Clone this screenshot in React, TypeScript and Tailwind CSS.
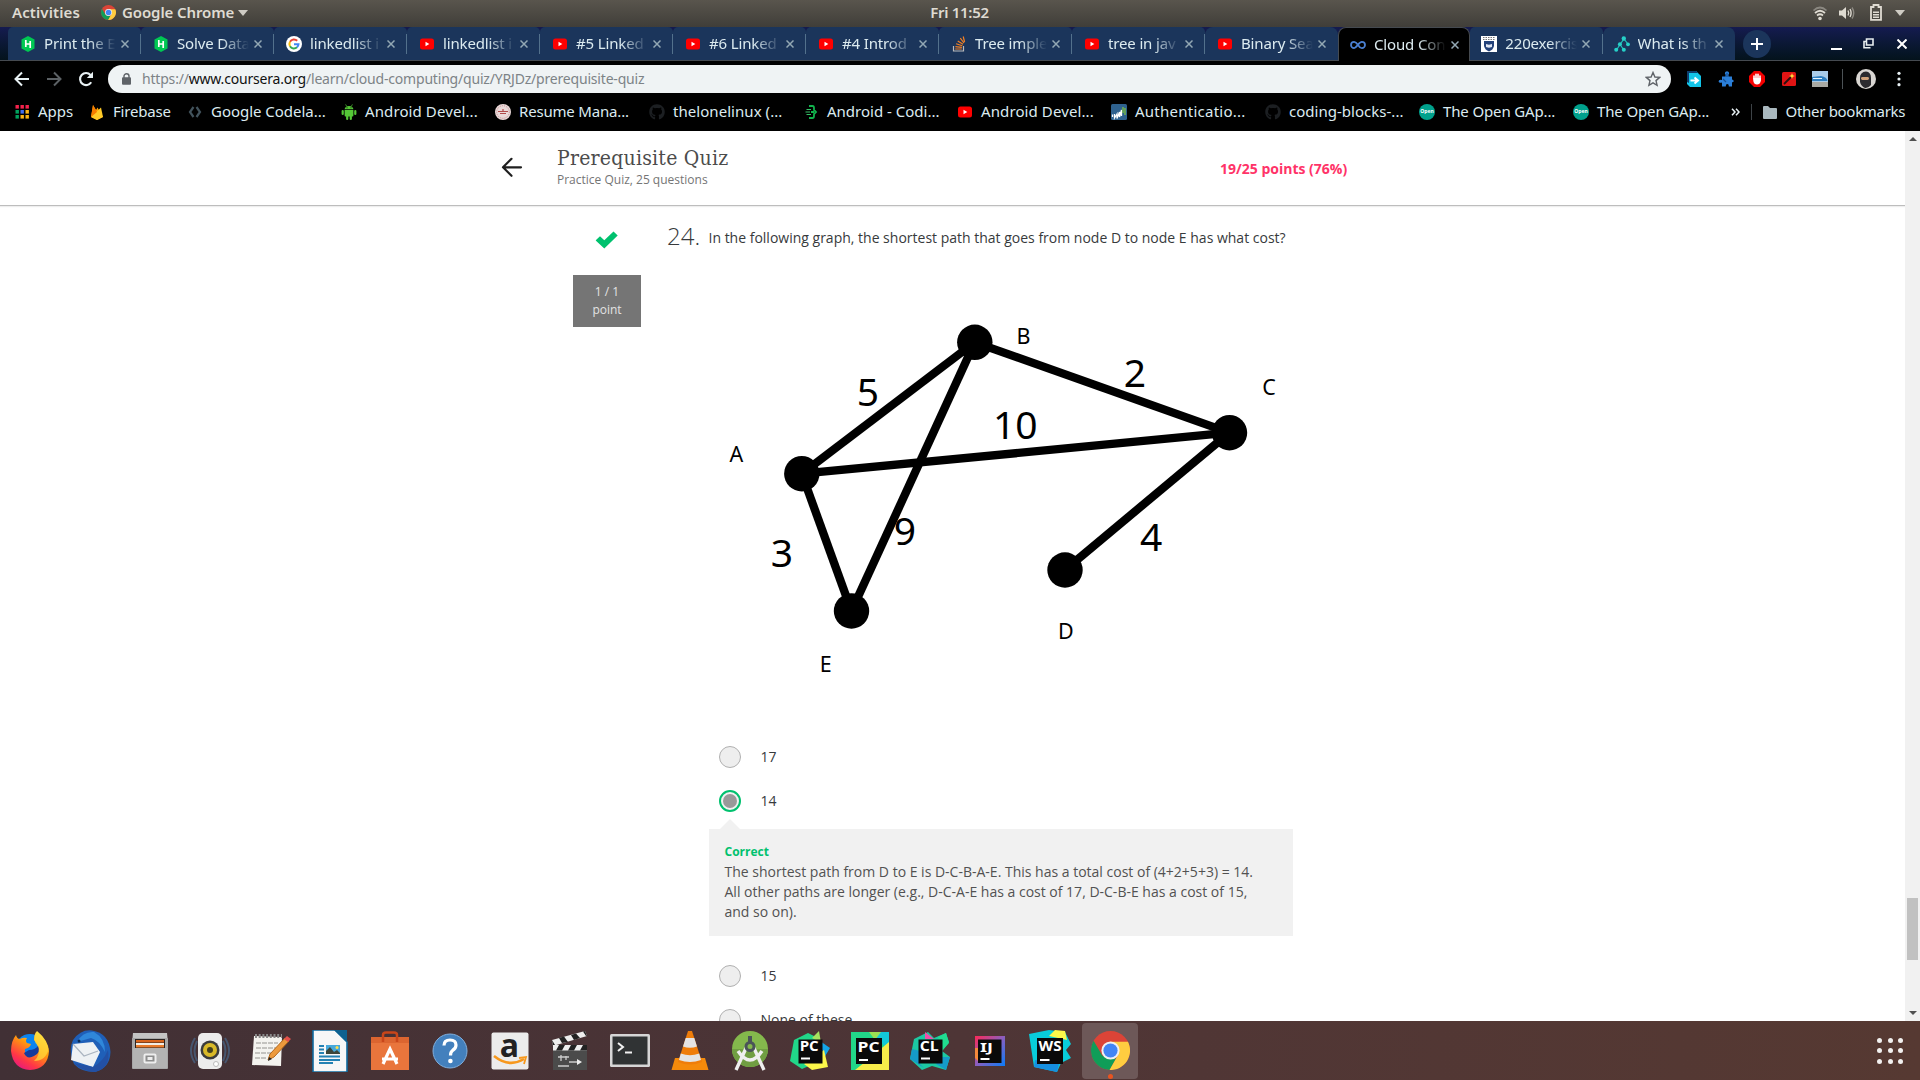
import React from "react";
import { FaGithub } from "react-icons/fa";

type P = { children?: React.ReactNode };

const Svg = ({ s = 16, vb = 16, children }: P & { s?: number; vb?: number }) => (
  <svg width={s} height={s} viewBox={`0 0 ${vb} ${vb}`} className="block shrink-0" fill="none">
    {children}
  </svg>
);

/* ---------- small icons ---------- */

const Chrome = ({ s = 16 }: { s?: number }) => (
  <Svg s={s} vb={40}>
    <circle cx="20" cy="20" r="20" fill="#db4437" />
    <path d="M2.7 10 L11.5 25 L20 29 L26 28 L19 40 A20 20 0 0 1 2.7 10" fill="#109d58" />
    <path d="M20 11 H37.9 A20 20 0 0 1 19 40 L28 24 Z" fill="#ffcd40" />
    <circle cx="20" cy="20" r="9.3" fill="#f1f1f1" />
    <circle cx="20" cy="20" r="7.3" fill="#4285f4" />
  </Svg>
);

const Hacker = () => (
  <Svg>
    <path d="M8 0 L14.5 3.5 V12.5 L8 16 L1.5 12.5 V3.5 Z" fill="#00c853" />
    <path d="M5.8 4 V11 M10.2 5 V12 M5.8 8 H10.2" stroke="#fff" strokeWidth="1.7" />
  </Svg>
);

const Google = () => (
  <Svg>
    <circle cx="8" cy="8" r="8" fill="#fff" />
    <path d="M11.2 4.8 A4.6 4.6 0 0 0 4 5.8" stroke="#ea4335" strokeWidth="2" />
    <path d="M4 5.8 A4.6 4.6 0 0 0 4 10.3" stroke="#fbbc05" strokeWidth="2" />
    <path d="M4 10.3 A4.6 4.6 0 0 0 11 11.3" stroke="#34a853" strokeWidth="2" />
    <path d="M8 8.2 H12.5 A4.6 4.6 0 0 1 11 11.3" stroke="#4285f4" strokeWidth="2" />
  </Svg>
);

const YouTube = () => (
  <Svg>
    <rect x="1" y="2.5" width="14" height="11" rx="2.5" fill="#f00" />
    <path d="M6.5 5.8 L10.3 8 L6.5 10.2 Z" fill="#fff" />
  </Svg>
);

const Android = () => (
  <Svg>
    <g fill="#55c837">
      <path d="M3.6 5.2 Q4 2 8 1.9 Q12 2 12.4 5.2 Z" />
      <path d="M3.6 5.9 H12.4 V11.6 Q12.4 12.5 11.5 12.5 H4.5 Q3.6 12.5 3.6 11.6 Z" />
      <rect x="0.6" y="5.9" width="2.2" height="5.2" rx="1.1" />
      <rect x="13.2" y="5.9" width="2.2" height="5.2" rx="1.1" />
      <rect x="5.1" y="11" width="2.2" height="5" rx="1.1" />
      <rect x="8.7" y="11" width="2.2" height="5" rx="1.1" />
    </g>
    <path d="M4.6 .4 L5.8 2.6 M11.4 .4 L10.2 2.6" stroke="#55c837" strokeWidth=".7" />
    <circle cx="6" cy="3.8" r=".5" fill="#000" />
    <circle cx="10" cy="3.8" r=".5" fill="#000" />
  </Svg>
);

const Stack = () => (
  <Svg>
    <path d="M2.5 10 V15 H12.5 V10" stroke="#bcbbbb" strokeWidth="1.2" />
    <path d="M4.2 13 H10.8 M4.4 10.6 L10.9 11.4 M5.1 7.8 L11.3 9.8 M6.7 4.9 L12 8.3 M9.3 2.2 L13 7 M12.2 .5 L13.6 6" stroke="#f48024" strokeWidth="1.2" />
  </Svg>
);

const Infinity2 = () => (
  <Svg>
    <path d="M8 8 C6.5 5.6 5.3 4.9 4.1 4.9 A3.1 3.1 0 0 0 4.1 11.1 C6.6 11.1 8.6 4.9 11.9 4.9 A3.1 3.1 0 0 1 11.9 11.1 C10.7 11.1 9.4 10.3 8 8" stroke="#4a7fd0" strokeWidth="1.8" />
  </Svg>
);

const Crest = () => (
  <Svg>
    <rect width="16" height="16" fill="#fff" />
    <path d="M2 1.5 H14 M2 3.5 H14" stroke="#777" strokeWidth="1" strokeDasharray="1.5 1" />
    <path d="M3 5 H13 V10 Q12 14 8 15.5 Q4 14 3 10 Z" fill="#24427a" />
    <path d="M5 8 L8 8.7 L11 8 V11 L8 11.7 L5 11 Z" fill="#dfe6f2" />
  </Svg>
);

const Tree = () => (
  <Svg>
    <path d="M9.5 3.5 L6 8.5 L2.5 14 M6 8.5 L9.5 13.5 M10 3 L14 8" stroke="#22c4bd" strokeWidth="1.2" />
    <circle cx="9.8" cy="2.5" r="2.2" fill="#26d0c8" />
    <circle cx="5.9" cy="8.3" r="2" fill="#26d0c8" />
    <circle cx="14" cy="8.3" r="1.9" fill="#26d0c8" />
    <circle cx="2.2" cy="13.7" r="2" fill="#26d0c8" />
    <circle cx="9.8" cy="13.7" r="2" fill="#26d0c8" />
  </Svg>
);

const Apps = () => (
  <Svg>
    {["#f4224c", "#f4224c", "#f4224c", "#00a35f", "#3f6df0", "#fbb414", "#00a35f", "#fbb414", "#fbb414"].map((c, i) => (
      <rect key={i} x={1.5 + (i % 3) * 5} y={1 + Math.floor(i / 3) * 5} width="3.4" height="3.6" fill={c} />
    ))}
  </Svg>
);

const Firebase = () => (
  <Svg>
    <path d="M2 13 L4 1 L7 6 L8.5 3.5 L14 13 L8 16 Z" fill="#ffa000" />
    <path d="M2 13 L12 3.5 L14 13 L8 16 Z" fill="#ffca28" />
    <path d="M4 1 L8 8 L2 13 Z" fill="#f57c00" />
  </Svg>
);

const Codelabs = () => (
  <Svg>
    <path d="M6.5 3 L3 8 L6.5 13 M9.5 3 L13 8 L9.5 13" stroke="#42535c" strokeWidth="2.2" />
  </Svg>
);

const Resume = () => (
  <Svg>
    <circle cx="8" cy="8" r="8" fill="#ead9d9" />
    <circle cx="8" cy="8" r="6.3" stroke="#b77b7b" strokeWidth="0.8" strokeDasharray="1 1" />
    <path d="M3 7.5 H13 M5 9.5 H11 M8 5 V8" stroke="#b04a4a" strokeWidth="1.2" />
  </Svg>
);

const CodingBlocks = () => (
  <Svg>
    <path d="M6 2 H9.5 Q11 2 11 4 V6 L13 8 L11 10 V12 Q11 14 9.5 14 H6 M11 8 H8" stroke="#11b24c" strokeWidth="1.8" />
    <path d="M3.5 5.5 H8 M2.5 8 H7 M3.5 10.5 H8" stroke="#36c168" strokeWidth="1.2" />
  </Svg>
);

const Auth = () => (
  <Svg>
    <rect width="16" height="16" rx="1.5" fill="#2f628f" />
    <path d="M1.5 10.5 V13 M3.5 10 V14 L6 10 V14.5 L8.5 8 V13 L10.5 6 V12" stroke="#fff" strokeWidth="1.3" />
    <path d="M12 3 V9 M14 4 V11" stroke="#7fc242" strokeWidth="1.3" />
  </Svg>
);

const OpenG = () => (
  <span className="flex size-4 items-center justify-center rounded-full bg-[#00a18c] font-['Noto_Sans',sans-serif] text-[5px] font-bold tracking-normal text-white">
    Open
  </span>
);

const Octo = () => <FaGithub size={16} color="#1c1f22" />;

const tabs: [React.ReactNode, string][] = [
  [<Hacker />, "Print the E"],
  [<Hacker />, "Solve Data"],
  [<Google />, "linkedlist i"],
  [<YouTube />, "linkedlist i"],
  [<YouTube />, "#5 Linked"],
  [<YouTube />, "#6 Linked"],
  [<YouTube />, "#4 Introd"],
  [<Stack />, "Tree imple"],
  [<YouTube />, "tree in jav"],
  [<YouTube />, "Binary Sea"],
  [<Infinity2 />, "Cloud Con"],
  [<Crest />, "220exercis"],
  [<Tree />, "What is th"],
];

const bookmarks: [React.ReactNode, string, string][] = [
  [<Apps />, "Apps", "w-[75px]"],
  [<Firebase />, "Firebase", "w-[98px] tracking-[-0.18px]"],
  [<Codelabs />, "Google Codela...", "w-[154px] tracking-[-0.03px]"],
  [<Android />, "Android Devel...", "w-[154px] tracking-[0.1px]"],
  [<Resume />, "Resume Mana...", "w-[154px] tracking-[-0.18px]"],
  [<Octo />, "thelonelinux (...", "w-[154px] tracking-[0.05px]"],
  [<CodingBlocks />, "Android - Codi...", "w-[154px]"],
  [<YouTube />, "Android Devel...", "w-[154px] tracking-[0.1px]"],
  [<Auth />, "Authenticatio...", "w-[154px] tracking-[0.25px]"],
  [<Octo />, "coding-blocks-...", "w-[154px] tracking-[0.02px]"],
  [<OpenG />, "The Open GAp...", "w-[154px] tracking-[-0.14px]"],
  [<OpenG />, "The Open GAp...", "w-[146px] tracking-[-0.14px]"],
];

function TopBar() {
  return (
    <div className="flex h-[27px] shrink-0 items-center whitespace-nowrap bg-linear-to-b from-[#59554d] to-[#403e39] pb-[2px] text-[15px] font-semibold text-[#dfdbd2]">
      <div className="flex flex-1 items-center pl-3">
        <span className="w-[89px] tracking-[0.1px]">Activities</span>
        <Chrome s={15} />
        <span className="ml-[6px] w-[111px] tracking-[-0.1px]">Google Chrome</span>
        <svg width="10" height="6" className="ml-[5px]"><path d="M0 0 H10 L5 6 Z" fill="#cfccc4" /></svg>
      </div>
      <span className="ml-[2px] tracking-[-0.3px]">Fri 11:52</span>
      <div className="flex flex-1 items-center justify-end pr-[15px]">
        <svg width="16" height="16" viewBox="0 0 16 16" fill="none" strokeWidth="1.7">
          <path d="M1.5 5.5 Q8 -.5 14.5 5.5" stroke="#8b8881" />
          <path d="M3 8 Q8 3.5 13 8 M5 10.5 Q8 8 11 10.5" stroke="#dfdbd2" />
          <circle cx="8" cy="13.5" r="1.8" fill="#dfdbd2" />
        </svg>
        <svg width="16" height="16" viewBox="0 0 16 16" fill="none" strokeWidth="1.4" className="ml-[11px]">
          <path d="M0 5.5 H3 L7 2 V14 L3 10.5 H0 Z" fill="#dfdbd2" />
          <path d="M9 5.5 Q10.5 8 9 10.5 M11 4 Q13.2 8 11 12" stroke="#dfdbd2" />
          <path d="M13 2.5 Q16.5 8 13 13.5" stroke="#8b8881" />
        </svg>
        <svg width="12" height="17" viewBox="0 0 12 17" fill="none" className="ml-[15px]">
          <path d="M3.5 3 V1 H8.5 V3 H11 V15.8 H1 V3 Z" stroke="#dfdbd2" strokeWidth="1.8" />
          <path d="M3 8.2 H9 M3 10.7 H9 M3 13.2 H9" stroke="#dfdbd2" strokeWidth="1.5" />
        </svg>
        <svg width="10" height="6" className="ml-[13px]"><path d="M0 0 H10 L5 6 Z" fill="#cfccc4" /></svg>
      </div>
    </div>
  );
}

function TabStrip() {
  return (
    <div className="flex h-[34px] shrink-0 items-stretch border-b border-[#454a50] bg-linear-to-b from-[#151b50] to-[#04131c] pl-2">
      {tabs.map(([icon, title], i) => {
        const active = i === 10;
        const bar = i !== 9 && !active && i !== 12;
        return (
          <div
            key={i}
            className={
              "flex items-center " +
              (i < 10 ? "w-[133px] pl-3 " : "w-[132.3px] pl-[11px] ") +
              (active
                ? "-mb-px rounded-t-[8px] border border-b-0 border-[#454a50] bg-black"
                : i === 12 || i === 9
                  ? "rounded-t-[8px] bg-[#1b355b]"
                  : "rounded-t-[5px] bg-[#1b355b]")
            }
          >
            {icon}
            <span className="ml-2 w-[72px] whitespace-nowrap pb-[2px] text-[15px] leading-5 tracking-[-0.15px] text-[#dcebf0] [mask-image:linear-gradient(to_right,#000_62%,transparent)]">
              {title}
            </span>
            <svg width="8" height="8" viewBox="0 0 8 8" className="ml-[5px]"><path d="M.5 .5 L7.5 7.5 M7.5 .5 L.5 7.5" stroke="#93a8b4" strokeWidth="1.5" /></svg>
            <span className={bar ? "ml-auto h-5 w-px bg-[#53718c]" : "hidden"} />
          </div>
        );
      })}
      <span className="ml-[8px] flex size-7 items-center justify-center self-center rounded-full bg-[#1b355b]">
        <svg width="12" height="12"><path d="M6 0 V12 M0 6 H12" stroke="#fff" strokeWidth="2" /></svg>
      </span>
      <div className="flex flex-1 items-center justify-end pr-[13px]">
        <svg width="11" height="12"><path d="M0 11 H11" stroke="#fff" strokeWidth="2" /></svg>
        <svg width="11" height="11" fill="none" className="ml-[21px]"><path d="M3.5 1 H10 V7 H3.5 Z M3 3.5 H1 V9.8 H7.5" stroke="#e8eef0" strokeWidth="1.6" /></svg>
        <svg width="10" height="10" className="ml-[23px]"><path d="M.5 .5 L9.5 9.5 M9.5 .5 L.5 9.5" stroke="#fff" strokeWidth="2" /></svg>
      </div>
    </div>
  );
}

function Toolbar() {
  return (
    <div className="flex h-9 shrink-0 items-center bg-black pl-[14px]">
      <Svg s={16}><path d="M15 8 H2 M8 1.5 L1.5 8 L8 14.5" stroke="#e8f1f4" strokeWidth="2" /></Svg>
      <span className="ml-4"><Svg s={16}><path d="M1 8 H14 M8 1.5 L14.5 8 L8 14.5" stroke="#5c6165" strokeWidth="2" /></Svg></span>
      <span className="ml-4"><Svg s={16}><path d="M13.2 11.2 A6 6 0 1 1 12.5 4" stroke="#e8f1f4" strokeWidth="2.1" /><path d="M15 .8 V7 H8.8 Z" fill="#e8f1f4" /></Svg></span>
      <div className="ml-[14px] flex h-7 w-[1563px] items-center rounded-full bg-[#eff3f4] pl-[14px] pr-[10px]">
        <svg width="9" height="12" viewBox="0 0 9 12" fill="none"><path d="M2 5 V3 A2.5 2.2 0 0 1 7 3 V5" stroke="#5f6368" strokeWidth="1.4" /><rect y="4.2" width="9" height="7.6" rx="1" fill="#5f6368" /></svg>
        <span className="ml-[11px] pb-px text-[14px] tracking-[-0.19px] text-[#7d8387]">
          https://<span className="text-[#111]">www.coursera.org</span>/learn/cloud-computing/quiz/YRJDz/prerequisite-quiz
        </span>
        <span className="ml-auto"><Svg s={16}><path d="M8 1.5 L9.9 6 L14.7 6.4 L11 9.6 L12.1 14.3 L8 11.8 L3.9 14.3 L5 9.6 L1.3 6.4 L6.1 6 Z" stroke="#5f6368" strokeWidth="1.4" /></Svg></span>
      </div>
      <div className="ml-[15px] flex items-center gap-[15.6px]">
        <Svg><path d="M1 0 H10 L15 5 V16 H4 L1 13 Z" fill="#12c4e8" /><path d="M1 0 H10 L12 2 H3 V12 L1 11 Z" fill="#0e3d6d" /><path d="M4.5 9.5 H11 M8.5 6.5 L12 9.5 L8.5 12.5" stroke="#fff" strokeWidth="2" /></Svg>
        <Svg><path d="M7.5 5.5 V3.6 A2 2 0 1 1 10.5 3.6 V5.5 H14 V8.5 Q16 9 15.6 10.5 Q15.2 11.5 14 11.2 V15.5 H10.8 Q11 13 9.3 12.9 Q7.6 13 7.8 15.5 H4 V11.5 Q1 12.5 .6 10.5 Q.6 8.3 4 9 V5.5 Z" fill="#2b7fd8" /><path d="M9 2 V6 M5 8 L8 11" stroke="#174f94" strokeWidth="1.2" /></Svg>
        <Svg><path d="M5 0 H11 L16 5 V11 L11 16 H5 L0 11 V5 Z" fill="#f40000" /><path d="M5 8 V5 M7 8 V3.3 M9 8 V3.3 M11 9 V5" stroke="#fff" strokeWidth="1.6" strokeLinecap="round" /><path d="M4.3 7 H11.8 V10 Q11 13.5 8 13.5 Q5 13.5 4.3 10 Z" fill="#fff" /></Svg>
        <Svg><rect x="1" y="1" width="14" height="14" rx="1.5" fill="#e01414" /><path d="M3 13 L10 6" stroke="#2a1010" strokeWidth="1.8" /><path d="M11 2 L11.8 4.2 L14 5 L11.8 5.8 L11 8 L10.2 5.8 L8 5 L10.2 4.2 Z" fill="#ffe23a" /></Svg>
        <Svg><rect width="16" height="16" fill="#a9cbe8" /><path d="M0 6 L9 5 Q15 6 15.5 10 H0 Z" fill="#2f7fc0" /><path d="M1 7.5 H10" stroke="#e7f3fb" /><rect y="11" width="16" height="5" fill="#a9a9a3" /></Svg>
      </div>
      <span className="ml-[14px] h-5 w-px bg-[#4c5256]" />
      <span className="ml-[13px]">
        <Svg s={20} vb={20}><circle cx="10" cy="10" r="10" fill="#d9d6d2" /><path d="M4 9 Q4 3 10 2.5 Q15 3 15 9 V16 Q12 19.5 9 19 Q5 17 4 13 Z" fill="#2c2b2f" /><rect x="5" y="8" width="8" height="3" rx="1.4" fill="#d0a179" /></Svg>
      </span>
      <svg width="4" height="16" className="ml-[21px]" fill="#e8f1f4"><circle cx="2" cy="2.3" r="1.6" /><circle cx="2" cy="8" r="1.6" /><circle cx="2" cy="13.7" r="1.6" /></svg>
    </div>
  );
}

function Bookmarks() {
  return (
    <div className="flex h-[34px] shrink-0 items-center whitespace-nowrap bg-black pb-[4px] pl-[14px] text-[15px] text-[#dcebf0]">
      {bookmarks.map(([icon, t, w], i) => (
        <div key={i} className={"flex shrink-0 items-center gap-2 " + w}>
          {icon}
          <span className="pb-px">{t}</span>
        </div>
      ))}
      <svg width="9" height="8" viewBox="0 0 9 8" fill="none" className="ml-[12px]"><path d="M1 .7 L4 4 L1 7.3 M5 .7 L8 4 L5 7.3" stroke="#e8f1f4" strokeWidth="1.5" /></svg>
      <span className="ml-[11px] h-4 w-px bg-[#3d4347]" />
      <svg width="14" height="13" className="ml-[11px]"><path d="M0 1 Q0 0 1 0 H5 L7 2 H13 Q14 2 14 3 V12 Q14 13 13 13 H1 Q0 13 0 12 Z" fill="#a9b8be" /></svg>
      <span className="ml-[8.5px] pb-px tracking-[-0.3px]">Other bookmarks</span>
    </div>
  );
}

function Graph() {
  const lines = [
    [801.8, 473.7, 974.8, 342.3],
    [974.8, 342.3, 1229.3, 432.7],
    [801.8, 473.7, 1229.3, 432.7],
    [974.8, 342.3, 851.5, 611],
    [801.8, 473.7, 851.5, 611],
    [1229.3, 432.7, 1064.9, 570],
  ];
  const nodes = [[801.8, 473.7], [974.8, 342.3], [1229.5, 432.7], [1065, 570], [851.5, 611]];
  const costs: [string, number, number][] = [["5", 867.8, 406], ["2", 1134.8, 387], ["10", 1015.2, 439], ["9", 904.8, 545.3], ["4", 1151.2, 551], ["3", 781.8, 567]];
  const names: [string, number, number][] = [["B", 1023.6, 343.7], ["C", 1269, 395.3], ["A", 736.4, 461.7], ["D", 1065.8, 639], ["E", 825.8, 672]];
  return (
    <svg width="620" height="400" viewBox="700 300 620 400" className="block font-['Noto_Sans',sans-serif]" textAnchor="middle">
      {lines.map(([a, b, c, d], i) => <line key={i} x1={a} y1={b} x2={c} y2={d} stroke="#000" strokeWidth="8.3" />)}
      {nodes.map(([x, y], i) => <circle key={i} cx={x} cy={y} r="17.7" />)}
      {costs.map(([t, x, y]) => <text key={t} x={x} y={y} fontSize="39">{t}</text>)}
      {names.map(([t, x, y]) => <text key={t} x={x} y={y} fontSize="21.5">{t}</text>)}
    </svg>
  );
}

const Option = ({ label, on }: { label: string; on?: boolean }) => (
  <div className="flex h-[22px] items-center">
    {on ? (
      <span className="flex size-[22px] items-center justify-center rounded-full border-2 border-[#00c16e] bg-[#f1f1f1]">
        <span className="size-[14px] rounded-full bg-[#999]" />
      </span>
    ) : (
      <span className="size-[22px] rounded-full border border-[#b0b0b0] bg-[#eee]" />
    )}
    <span className="ml-[19.5px] pb-[2px] text-[14px] text-[#373a3c]">{label}</span>
  </div>
);

function Page() {
  return (
    <div className="flex min-h-0 flex-1 bg-white font-['Open_Sans',sans-serif]">
      <div className="flex min-w-0 flex-1 flex-col overflow-hidden">
        <header className="flex h-[75px] shrink-0 items-start border-b border-[#bdbdbd] shadow-[0_1px_1px_#eee]">
          <svg width="22" height="20" viewBox="0 0 22 20" fill="none" className="ml-[501px] mt-[26px]" strokeLinecap="round" strokeLinejoin="round">
            <path d="M20 10.3 H2 M10.5 1.8 L2 10.3 L10.5 18.8" stroke="#1f1f1f" strokeWidth="2.2" />
          </svg>
          <div className="ml-[34px] w-[663px] pt-[13px]">
            <h1 className="font-['DejaVu_Serif_Condensed','DejaVu_Serif',serif] text-[21px] font-normal leading-[28px] tracking-[0.22px] text-[#4c4c4c]">Prerequisite Quiz</h1>
            <p className="-mt-px text-[12px] leading-[18px] text-[#757575]">Practice Quiz, 25 questions</p>
          </div>
          <span className="pt-[27px] text-[14px] font-bold leading-[21px] text-[#ff3368]">19/25 points (76%)</span>
        </header>
        <div className="flex pl-[573px]">
          <div className="flex w-[68px] flex-col items-center">
            <svg width="24" height="18" viewBox="0 0 24 18" className="mt-[25px]"><path d="M1.5 8.5 L5 5.2 L9.3 9.2 L18.5 .6 L22.7 4.6 L9.3 17.4 L.7 9.4 Z" fill="#00c16e" /></svg>
            <div className="mt-[26px] h-[52px] w-[68px] bg-[#757575] pt-[8px] text-center text-[12px] leading-[18px] text-[#e3e3e3]">
              1 / 1<br />point
            </div>
          </div>
          <div className="ml-[26px] w-[660px]">
            <div className="flex h-[50px] items-start pt-[12px] text-[#373a3c]">
              <span className="w-[41.5px] text-[24px] font-light leading-[36px]">24.</span>
              <span className="whitespace-nowrap pt-[10px] text-[14px] leading-[20px]">In the following graph, the shortest path that goes from node D to node E has what cost?</span>
            </div>
            <div className="ml-[33px] mt-[44px]"><Graph /></div>
            <div className="ml-[52px] mt-[46px] flex flex-col gap-[22px]">
              <Option label="17" />
              <Option label="14" on />
            </div>
            <div className="ml-[42px] mt-[7px] w-[584px]">
              <svg width="20" height="10" className="ml-[11px] block"><path d="M10 0 L20 10 H0 Z" fill="#f1f1f1" /></svg>
              <div className="h-[107px] bg-[#f1f1f1] pl-[15.5px] pt-[13px]">
                <p className="text-[12px] font-bold leading-[19px] text-[#00c16e]">Correct</p>
                <p className="mt-px w-[545px] text-[14px] leading-[20px] text-[#525252]">
                  The shortest path from D to E is D-C-B-A-E. This has a total cost of (4+2+5+3) = 14. All other paths are longer (e.g., D-C-A-E has a cost of 17, D-C-B-E has a cost of 15, and so on).
                </p>
              </div>
            </div>
            <div className="ml-[52px] mt-[29px] flex flex-col gap-[22px]">
              <Option label="15" />
              <Option label="None of these" />
            </div>
          </div>
        </div>
      </div>
      <div className="flex w-[15px] flex-col items-center bg-[#f1f1f1]">
        <svg width="8" height="4" className="mt-[6px]"><path d="M0 4 L4 0 L8 4 Z" fill="#505050" /></svg>
        <span className="mt-[757px] h-[62px] w-[11px] bg-[#c1c1c1]" />
        <svg width="8" height="4" className="mb-[6px] mt-auto"><path d="M0 0 L4 4 L8 0 Z" fill="#505050" /></svg>
      </div>
    </div>
  );
}

/* ---------- dock ---------- */

const Jet = ({ t, children }: P & { t: string }) => (
  <Svg s={40} vb={40}>
    {children}
    <rect x="8.5" y="8.5" width="24" height="24" fill="#0a0a0a" />
    <text x="9.7" y="20.3" fontSize="14" fontWeight="700" fill="#fff" className="font-['Open_Sans',sans-serif]" textLength="19" lengthAdjust="spacingAndGlyphs">{t}</text>
    <rect x="11" y="26.5" width="9" height="2" fill="#fff" />
  </Svg>
);

const dock: React.ReactNode[] = [
  <Svg s={40} vb={40}>
    <defs>
      <linearGradient id="ff" x1="0.8" y1="0" x2="0.2" y2="1"><stop offset="0" stopColor="#fff34f" /><stop offset=".4" stopColor="#ff980e" /><stop offset=".75" stopColor="#ff3647" /><stop offset="1" stopColor="#e31587" /></linearGradient>
    </defs>
    <circle cx="20" cy="18" r="15" fill="#0a84f0" />
    <path d="M1 20 Q1 10 6 4 Q7 8 10 8 Q13 6 17 7 Q15 10 17 12 L21 13 Q20 17 15 18 Q14 23 19 25 Q25 26 28 20 Q29 14 24 9 Q24 3 27 0 Q38 9 39 20 Q38 38 20 39 Q3 38 1 20 Z" fill="url(#ff)" />
    <path d="M26 1 Q22 10 28 15 Q31 24 24 30 Q36 30 38.5 18 Q36 7 26 1 Z" fill="#ffd93b" opacity=".75" />
    <path d="M14 22 Q17 29 24 25 Q31 22 28 15 Q25 19 19 19 Z" fill="#173a9c" />
  </Svg>,
  <Svg s={42} vb={42}>
    <path d="M4 10 Q12 -1 23 .5 Q40 3 41.5 22 Q41 38 26 42 Q12 42 5 34 Q-1 20 4 10 Z" fill="#1f5fb8" />
    <path d="M8 12 Q14 1 25 2 Q36 8 36 22 Q30 10 22 8 Z" fill="#2f87da" />
    <path d="M4 14 L24 12 L31 22 L24 37 L2 30 Z" fill="#eef1f4" />
    <path d="M4 14 L15 26 L29 21" stroke="#aab4c0" strokeWidth="1.2" />
    <path d="M24 37 Q34 32 39 20 Q42 38 26 42 Q12 41 5 33 Z" fill="#2350a4" />
    <circle cx="10" cy="11" r="1.5" fill="#0b2b55" />
  </Svg>,
  <Svg s={40} vb={40}>
    <path d="M3 2 H37 L38 12 H2 Z" fill="#c4c4c4" /><rect x="2" y="7" width="36" height="31" fill="#a7a7a7" rx="1" /><rect x="5" y="8" width="30" height="9" fill="#2b2422" />
    <rect x="6" y="9" width="28" height="2.5" fill="#d8631c" /><rect x="6" y="12" width="28" height="2" fill="#f2ede4" /><rect x="6" y="14" width="28" height="2.5" fill="#e87b2c" />
    <rect x="3" y="17" width="34" height="20" fill="#b3b3b3" /><rect x="14.5" y="23.5" width="11" height="8" rx="1" stroke="#eee" strokeWidth="2" fill="#8d8d8d" /><rect x="17.5" y="26" width="5" height="3" fill="#eee" />
  </Svg>,
  <Svg s={42} vb={42}>
    <path d="M6 8 Q-2 21 6 33 M36 8 Q44 21 36 33 M8 11 Q3 21 8 31 M34 11 Q39 21 34 31" stroke="#47566f" strokeWidth="2" />
    <rect x="9" y="3" width="24" height="36" rx="5" fill="#ececec" /><circle cx="21" cy="20" r="9.5" fill="#3b3b3b" /><circle cx="21" cy="20" r="7" fill="#d9b928" /><circle cx="21" cy="20" r="3" fill="#44401c" /><circle cx="27" cy="34" r="2.5" fill="#fff" stroke="#bbb" />
  </Svg>,
  <Svg s={42} vb={42}>
    <path d="M5 6 L33 7 L32 36 L3 35 Z" fill="#f4f3ef" /><path d="M6 6 H33" stroke="#888" strokeWidth="4" strokeDasharray="2 1.7" />
    <path d="M7 13 H29 M7 18 H27 M6 23 H25 M6 28 H18" stroke="#b4b4b0" strokeWidth="1.4" strokeDasharray="5 1" />
    <path d="M19 30 L21 24 L36 8 L40 11 L25 27 Z" fill="#ed9a3c" stroke="#b4681c" /><path d="M35 9 L38 6 L42 9 L39 12 Z" fill="#e2504c" /><path d="M19 31 L20 27 L23 29 Z" fill="#222" />
  </Svg>,
  <Svg s={42} vb={42}>
    <path d="M4 0 H26 L38 12 V42 H4 Z" fill="#f7f7f7" stroke="#0f6a9f" strokeWidth="1.6" /><path d="M25 0 H38 V12 Z" fill="#0d6190" />
    <path d="M10 16 H15 M10 19.5 H15 M10 23 H15 M10 26.5 H31 M10 30 H31 M10 33 H24" stroke="#2482b4" strokeWidth="1.8" /><rect x="17" y="15" width="14" height="9" fill="#46a9dc" /><path d="M17 24 V21 L21 17 L25 22 L28 20 L31 23 V24 Z" fill="#3c463a" /><circle cx="28" cy="17.5" r="1.5" fill="#ffdf4a" />
  </Svg>,
  <Svg s={40} vb={40}>
    <path d="M13 10 V4 Q13 1.5 16 1.5 H24 Q27 1.5 27 4 V10" stroke="#c9461a" strokeWidth="2.5" /><path d="M1 6 H39 V39 H1 Z" fill="#e9753c" /><path d="M1 6 H39 V12 H1 Z" fill="#dc6530" /><path d="M13 6 V11 M27 6 V11" stroke="#c9461a" strokeWidth="2.5" />
    <path d="M13 33 L20 18 L27 33 M12 28 H28" stroke="#fff" strokeWidth="3.2" />
  </Svg>,
  <Svg s={36} vb={36}>
    <circle cx="18" cy="18" r="17" fill="#4380bd" stroke="#81b0de" /><path d="M12 12.5 Q12 7 18 7 Q24 7 24 12 Q24 15.5 20.5 17.5 Q18.5 19 18.5 22.5" stroke="#fff" strokeWidth="3.2" /><circle cx="18.4" cy="28" r="2.3" fill="#fff" />
  </Svg>,
  <Svg s={38} vb={38}>
    <rect x=".5" y=".5" width="37" height="37" rx="2" fill="#ececec" />
    <text x="18.5" y="24.5" fontSize="32" fontWeight="700" fill="#222" textAnchor="middle" className="font-['Open_Sans',sans-serif]">a</text>
    <path d="M3 24 Q18 36 33 27" stroke="#f7981d" strokeWidth="2.6" /><path d="M28 26 L35 25 L33 32" stroke="#f7981d" strokeWidth="1.8" />
  </Svg>,
  <Svg s={42} vb={42}>
    <path d="M3 10 L36 1 L38 6 L4 16 Z" fill="#eee" /><path d="M10 8 L13 13 L19 12 L15 6.5 Z M22 5 L25 10 L31 8 L27 3.5 Z M3 10 L6 15 L4 16 Z M34 1.5 L37 6 L38 6 L36 1 Z" fill="#222" />
    <rect x="4" y="16" width="34" height="24" fill="#4b4b4b" /><rect x="4" y="15" width="34" height="5.5" fill="#eee" /><path d="M7 20.5 L10 15 H16 L13 20.5 Z M19 20.5 L22 15 H28 L25 20.5 Z M31 20.5 L34 15 H38 V20.5 Z" fill="#222" />
    <path d="M9 27 H20 M12 25 V31 M17 26 V30 M20 32 H30 M9 36 H20" stroke="#ccc" strokeWidth="1.3" /><path d="M28 29 L33 32 L28 35 Z" fill="#eee" />
  </Svg>,
  <svg width="40" height="33" viewBox="0 0 40 33" fill="none"><rect width="40" height="33" rx="1.5" fill="#d6d6d6" /><rect x="2.5" y="2.5" width="35" height="28" fill="#303334" /><path d="M8 9 L13 13 L8 17 M15 18.5 H22" stroke="#f2f2f2" strokeWidth="2" /></svg>,
  <Svg s={40} vb={40}>
    <path d="M5 27 H35 L38.5 39 H1.5 Z" fill="#f58a0b" /><path d="M18 0 H22 L32 31 Q20 36 8 31 Z" fill="#ef7d0a" /><path d="M15.7 7 H24.3 L27 15.5 Q20 18 13 15.5 Z M10.8 22.5 Q20 26 29.2 22.5 L31 29 Q20 33 9 29 Z" fill="#e4e4e4" />
  </Svg>,
  <Svg s={40} vb={40}>
    <circle cx="20" cy="18" r="18" fill="#84b84c" /><path d="M2 18 H38 A18 18 0 0 1 2 18" fill="#709e42" /><path d="M17 15 L6 39 M23 15 L34 39" stroke="#eee" strokeWidth="3.4" /><path d="M8 20 Q20 38 32 20" stroke="#eee" strokeWidth="3.4" /><path d="M20 5 V12" stroke="#4a5458" strokeWidth="4" /><circle cx="20" cy="15.5" r="4" stroke="#4a5458" strokeWidth="3" fill="#84b84c" />
  </Svg>,
  <Jet t="PC"><path d="M4 9 L18 2 L30 8 V30 L12 38 L0 30 Z" fill="#21d789" /><path d="M22 7 L29 0 L31 12 Z" fill="#a6e35f" /><path d="M30 10 L40 17 L34 27 Z" fill="#14a5e8" /><path d="M34 19 L38 36 L22 39 L14 33 Z" fill="#fcf84a" /></Jet>,
  <svg width="38" height="38" viewBox="0 0 38 38" fill="none"><rect width="38" height="38" fill="#21d789" /><path d="M20 0 H38 V20 L30 10 Z" fill="#12c8d8" /><path d="M18 0 H30 L24 8 Z" fill="#9be052" /><path d="M38 10 V38 H4 L14 30 Z" fill="#f7ec4a" /><rect x="5" y="6" width="26" height="26" fill="#0a0a0a" /><text x="6.5" y="20" fontSize="15" fontWeight="700" fill="#fff" textLength="22" lengthAdjust="spacingAndGlyphs" className="font-['Open_Sans',sans-serif]">PC</text><rect x="8" y="27" width="9" height="2" fill="#fff" /></svg>,
  <Jet t="CL"><path d="M4 8 L18 1 L24 7 L36 2 L39 11 L32 20 L40 26 L36 39 L22 35 L12 39 L0 28 Z" fill="#1cc9a2" /><path d="M15 1 L24 8 H15 Z" fill="#f04fa8" /><path d="M2 18 L10 20 V33 L14 37 L0 28 Z M30 26 L40 26 L36 39 L26 33 Z" fill="#159bc9" /><path d="M28 6 L36 2 L39 12 L32 20 Z" fill="#20dd90" /></Jet>,
  <svg width="30" height="30" viewBox="0 0 30 30" fill="none"><defs><linearGradient id="ij" x1="0" y1="0" x2="1" y2="1"><stop offset="0" stopColor="#fe2857" /><stop offset=".5" stopColor="#8a5fbf" /><stop offset="1" stopColor="#087cfa" /></linearGradient></defs><rect width="30" height="30" fill="url(#ij)" /><path d="M0 12 L4 12 V26 L0 22 Z" fill="#f6893b" /><rect x="3" y="3.5" width="23.5" height="23.5" fill="#0a0a0a" /><text x="5" y="16" fontSize="12.5" fontWeight="700" fill="#fff" textLength="13" lengthAdjust="spacingAndGlyphs" className="font-['Noto_Sans',sans-serif]">IJ</text><rect x="5.5" y="22" width="9" height="2" fill="#fff" /></svg>,
  <svg width="42" height="42" viewBox="0 0 42 42" fill="none"><path d="M0 4 L20 0 L36 2 L42 14 L37 20 L42 28 L32 33 L28 42 L5 37 Z" fill="#08cddb" /><path d="M20 6 L26 0 L36 1 L38 10 Z" fill="#fcf84a" /><path d="M6 30 L30 34 L28 42 L5 37 Z" fill="#168fe0" /><rect x="8" y="8" width="26" height="26" fill="#0a0a0a" /><text x="9.5" y="21" fontSize="14.5" fontWeight="700" fill="#fff" textLength="23" lengthAdjust="spacingAndGlyphs" className="font-['Open_Sans',sans-serif]">WS</text><rect x="11" y="29" width="9.5" height="2" fill="#fff" /></svg>,
];

function Dock() {
  return (
    <div className="flex h-[59px] shrink-0 items-center bg-linear-to-r from-[#413035] via-[#4e3536] to-[#563932]">
      {dock.map((icon, i) => (
        <span key={i} className="flex w-[60px] items-center justify-center">{icon}</span>
      ))}
      <span className="relative ml-[2px] flex size-14 items-center justify-center rounded-[4px] bg-[#6d5858]">
        <Chrome s={39} />
        <span className="absolute bottom-0 left-[25.5px] size-[5px] rounded-full bg-[#e95420]" />
      </span>
      <div className="ml-auto mr-[17px] grid grid-cols-3 gap-[5.5px]">
        {Array.from({ length: 9 }, (_, i) => <span key={i} className="size-[5px] rounded-full bg-[#f2f0ef]" />)}
      </div>
    </div>
  );
}

export default function App() {
  return (
    <div className="flex h-[1080px] w-[1920px] flex-col overflow-hidden bg-white font-['Noto_Sans','Open_Sans',sans-serif]">
      <TopBar />
      <TabStrip />
      <Toolbar />
      <Bookmarks />
      <Page />
      <Dock />
    </div>
  );
}
